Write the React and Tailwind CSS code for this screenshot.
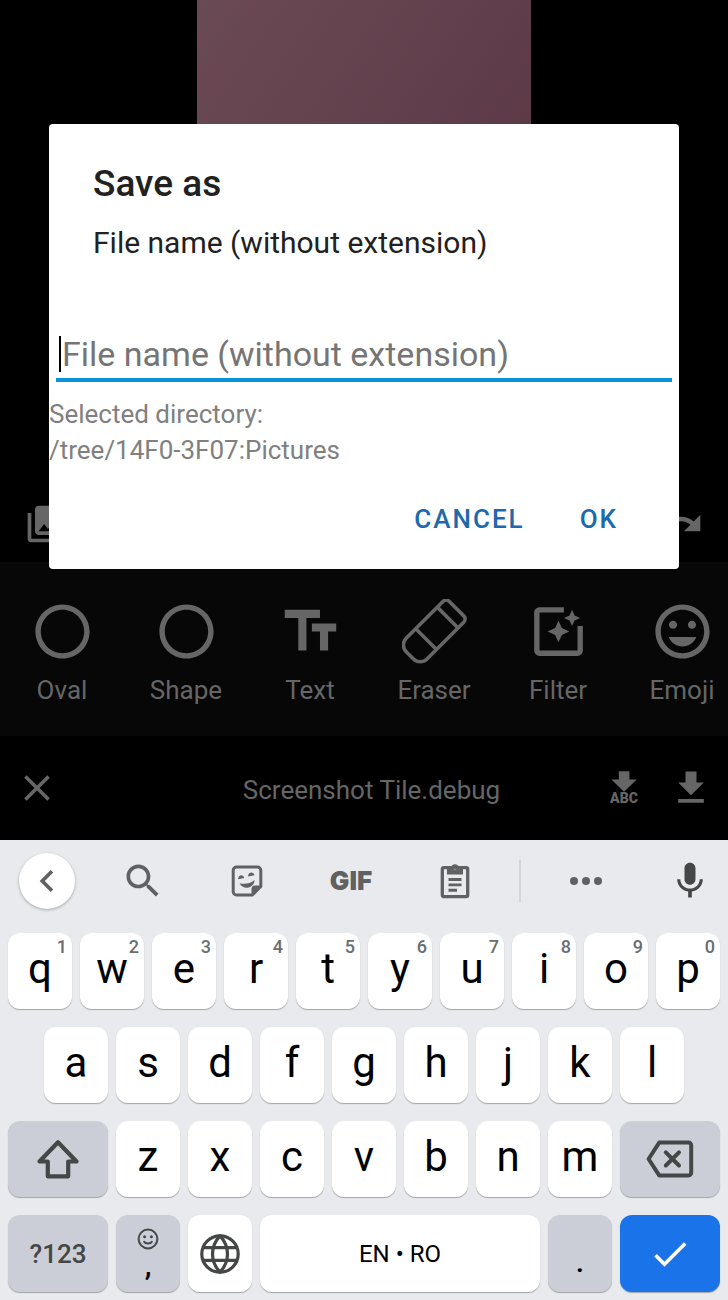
import React from "react";

function Material({ d, size = "size-11" }) {
  return (
    <svg viewBox="0 0 24 24" fill="currentColor" className={`${size} shrink-0`} aria-hidden="true">
      <path d={d} />
    </svg>
  );
}

const PATHS = {
  gallery:
    "M22 16V4c0-1.1-.9-2-2-2H8c-1.1 0-2 .9-2 2v12c0 1.1.9 2 2 2h12c1.1 0 2-.9 2-2zm-11-4l2.03 2.71L16 11l4 5H8l3-4zM2 6v14c0 1.1.9 2 2 2h14v-2H4V6H2z",
  redo: "M18.4 10.6C16.55 8.99 14.15 8 11.5 8c-4.65 0-8.58 3.03-9.96 7.22L3.9 16c1.05-3.19 4.05-5.5 7.6-5.5 1.95 0 3.73.72 5.12 1.88L13 16h9V7l-3.6 3.6z",
  circle:
    "M12 2C6.48 2 2 6.48 2 12s4.48 10 10 10 10-4.48 10-10S17.52 2 12 2zm0 18c-4.42 0-8-3.58-8-8s3.58-8 8-8 8 3.58 8 8-3.58 8-8 8z",
  text: "M2.5 4v3h5v12h3V7h5V4h-13zm19 5h-9v3h3v7h3v-7h3V9z",
  filter:
    "M19.02 10v9H5V5h9V3H5.02c-1.1 0-2 .9-2 2v14c0 1.1.9 2 2 2H19c1.1 0 2-.9 2-2v-9h-1.98zM17 10l.94-2.06L20 7l-2.06-.94L17 4l-.94 2.06L14 7l2.06.94L17 10zm-3.75.75L12 8l-1.25 2.75L8 12l2.75 1.25L12 16l1.25-2.75L16 12l-2.75-1.25z",
  emoji:
    "M11.99 2C6.47 2 2 6.48 2 12s4.47 10 9.99 10C17.52 22 22 17.52 22 12S17.52 2 11.99 2zM12 20c-4.42 0-8-3.58-8-8s3.58-8 8-8 8 3.58 8 8-3.58 8-8 8zm3.5-9c.83 0 1.5-.67 1.5-1.5S16.33 8 15.5 8 14 8.67 14 9.5s.67 1.5 1.5 1.5zm-7 0c.83 0 1.5-.67 1.5-1.5S9.33 8 8.5 8 7 8.67 7 9.5 7.67 11 8.5 11zm3.5 6.5c2.33 0 4.31-1.46 5.11-3.5H6.89c.8 2.04 2.78 3.5 5.11 3.5z",
  close:
    "M19 6.41L17.59 5 12 10.59 6.41 5 5 6.41 10.59 12 5 17.59 6.41 19 12 13.41 17.59 19 19 17.59 13.41 12z",
  download: "M19 9h-4V3H9v6H5l7 7 7-7zM5 18v2h14v-2H5z",
  back: "M15.41 7.41L14 6l-6 6 6 6 1.41-1.41L10.83 12z",
  search:
    "M15.5 14h-.79l-.28-.27C15.41 12.59 16 11.11 16 9.5 16 5.91 13.09 3 9.5 3S3 5.91 3 9.5 5.91 16 9.5 16c1.61 0 3.09-.59 4.23-1.57l.27.28v.79l5 4.99L20.49 19l-4.99-5zm-6 0C7.01 14 5 11.99 5 9.5S7.01 5 9.5 5 14 7.01 14 9.5 11.99 14 9.5 14z",
  mic: "M12 14c1.66 0 2.99-1.34 2.99-3L15 5c0-1.66-1.34-3-3-3S9 3.34 9 5v6c0 1.66 1.34 3 3 3zm5.3-3c0 3-2.54 5.1-5.3 5.1S6.7 14 6.7 11H5c0 3.41 2.72 6.23 6 6.72V21h2v-3.28c3.28-.48 6-3.3 6-6.72h-1.7z",
  check: "M9 16.17L4.83 12l-1.42 1.41L9 19 21 7l-1.41-1.41z",
};

function EraserIcon() {
  return (
    <svg viewBox="0 0 65 65" className="size-[65px]" fill="none" stroke="currentColor" strokeWidth="3.6" aria-hidden="true">
      <g transform="translate(31.2 33) rotate(-45)">
        <path d="M-23.5 -14.7H28.5a4.5 4.5 0 0 1 4.5 4.5V10.2a4.5 4.5 0 0 1 -4.5 4.5H-23.5a9.5 9.5 0 0 1 -9.5 -9.5V-5.2a9.5 9.5 0 0 1 9.5 -9.5z" />
        <path d="M-10 -14.7V14.7M20.5 -14.7V14.7" />
      </g>
    </svg>
  );
}

function DownloadAbcIcon() {
  return (
    <svg viewBox="0 0 44 44" className="size-11" fill="currentColor" aria-hidden="true">
      <path d="M16.8 5.3h10.6v8.2h7.4L22 25.8 9.4 13.5h7.4z" />
      <text x="22" y="37" textAnchor="middle" fontSize="14" fontWeight="900" fontFamily="Roboto, sans-serif">
        ABC
      </text>
    </svg>
  );
}

function StickerIcon() {
  return (
    <svg viewBox="0 0 32 32" className="size-8" fill="none" aria-hidden="true">
      <path
        d="M5.500 2h21A3.300 3.300 0 0 1 29.800 5.300V21.500L21.300 30H5.500A3.300 3.300 0 0 1 2.200 26.700V5.300A3.300 3.300 0 0 1 5.500 2z"
        stroke="currentColor"
        strokeWidth="3"
      />
      <path d="M20.500 31V24a3.500 3.500 0 0 1 3.500-3.500h7z" fill="currentColor" />
      <path
        d="M7.100 14.200c.2-5 5.400-5 6.100-1.200zM17 11.500c.2-5 5.700-5 6.400-1.200zM8.600 18.200c5.300 1.400 10.500.2 15-3.300-.6 9.200-12.200 10.200-15 3.300z"
        fill="currentColor"
      />
    </svg>
  );
}

function ClipboardIcon() {
  return (
    <svg viewBox="0 0 30 36" className="h-9 w-[30px]" fill="none" aria-hidden="true">
      <rect x="2.300" y="4.700" width="25.400" height="29" rx="1.600" stroke="currentColor" strokeWidth="3.300" />
      <path
        fillRule="evenodd"
        d="M7 4h4.200a4 4 0 0 1 7.600 0H23v7.500H7zM15 3.300a1.700 1.700 0 1 0 0 3.400 1.700 1.700 0 0 0 0-3.400z"
        fill="currentColor"
      />
      <path d="M8.500 16.500h13M8.500 21.900h13M8.500 27.300h8.500" stroke="currentColor" strokeWidth="2.900" />
    </svg>
  );
}

function MoreIcon() {
  return (
    <svg viewBox="0 0 32 8" className="h-2 w-8" fill="currentColor" aria-hidden="true">
      <circle cx="4" cy="4" r="4" />
      <circle cx="16" cy="4" r="4" />
      <circle cx="28" cy="4" r="4" />
    </svg>
  );
}

function ShiftIcon() {
  return (
    <svg viewBox="0 0 42 40" className="h-10 w-[42px]" fill="none" stroke="currentColor" strokeWidth="4.200" strokeLinejoin="round" aria-hidden="true">
      <path d="M21 3.200L39.500 22.500H31.200V37.300H10.800V22.500H2.500z" />
    </svg>
  );
}

function BackspaceIcon() {
  return (
    <svg viewBox="0 0 48 38" className="h-[38px] w-12" fill="none" stroke="currentColor" strokeWidth="4" strokeLinejoin="round" aria-hidden="true">
      <path d="M13.200 2.600H42.500a2.700 2.700 0 0 1 2.700 2.700V32.700a2.700 2.700 0 0 1 -2.700 2.700H13.200L2.600 19z" />
      <path d="M19.800 12.300L33 25.500M33 12.300L19.800 25.500" strokeLinecap="round" />
    </svg>
  );
}

function GlobeIcon() {
  return (
    <svg viewBox="0 0 40 40" className="size-10" fill="none" stroke="currentColor" strokeWidth="3.200" aria-hidden="true">
      <circle cx="20" cy="20" r="18.200" />
      <path d="M20 1.800C10 12.500 10 27.500 20 38.200C30 27.500 30 12.500 20 1.800zM3 13.700H37M3 26.300H37" />
    </svg>
  );
}

function SmileIcon() {
  return (
    <svg viewBox="0 0 22 22" className="size-[22px]" fill="none" stroke="currentColor" strokeWidth="2" aria-hidden="true">
      <circle cx="11" cy="11" r="9.400" />
      <circle cx="7.600" cy="8.800" r="1.500" fill="currentColor" stroke="none" />
      <circle cx="14.400" cy="8.800" r="1.500" fill="currentColor" stroke="none" />
      <path d="M6.600 13.300c1.800 3 7 3 8.800 0" />
    </svg>
  );
}

const big = "size-[65px]";
const TOOLS = [
  ["Oval", <Material d={PATHS.circle} size={big} />],
  ["Shape", <Material d={PATHS.circle} size={big} />],
  ["Text", <Material d={PATHS.text} size={big} />],
  ["Eraser", <EraserIcon />],
  ["Filter", <Material d={PATHS.filter} size={big} />],
  ["Emoji", <Material d={PATHS.emoji} size={big} />],
];

function Key({
  label,
  hint,
  span = "col-span-2",
  tone = "bg-white text-black",
  size = "text-[42px]",
  box = "h-[76px] pb-1",
  children,
}) {
  return (
    <button
      type="button"
      aria-label={label}
      className={`relative flex items-center justify-center rounded-xl leading-none shadow-[0_1px_1px_#a2a4a8] ${span} ${tone} ${size} ${box}`}
    >
      {children ?? label}
      {hint && <span className="absolute right-[5px] top-1 text-lg leading-5 font-medium text-[#6b6d70]">{hint}</span>}
    </button>
  );
}

const GRAY = "bg-[#cbced6] text-[#444746]";
const BOTTOM = "h-[77px]";

function Editor() {
  return (
    <div className="text-[#666666]">
      <div className="flex h-[486px] justify-center">
        <div className="w-[46%] bg-linear-to-br from-[#6a4a55] to-[#56303f]" />
      </div>
      <div className="flex h-[76px] items-center justify-between px-6">
        <button type="button" aria-label="Gallery">
          <Material d={PATHS.gallery} />
        </button>
        <button type="button" aria-label="Redo">
          <Material d={PATHS.redo} />
        </button>
      </div>
      <div className="grid h-[174px] auto-cols-[124px] grid-flow-col overflow-hidden bg-[#070707] pt-[37px]">
        {TOOLS.map(([name, icon]) => (
          <button key={name} type="button" className="flex flex-col items-center gap-2">
            {icon}
            <span className="text-[26px] leading-9">{name}</span>
          </button>
        ))}
      </div>
      <div className="flex h-[104px] items-center px-[15px]">
        <button type="button" aria-label="Close">
          <Material d={PATHS.close} />
        </button>
        <h1 className="flex-1 pt-1 pl-[82px] text-center text-[26px] leading-9">Screenshot Tile.debug</h1>
        <div className="flex gap-[23px]">
          <button type="button" aria-label="Save as">
            <DownloadAbcIcon />
          </button>
          <button type="button" aria-label="Save">
            <Material d={PATHS.download} />
          </button>
        </div>
      </div>
    </div>
  );
}

function SaveDialog() {
  return (
    <form
      role="dialog"
      aria-labelledby="save-title"
      onSubmit={(e) => e.preventDefault()}
      className="absolute inset-x-[49px] top-[124px] rounded-sm bg-white pt-[38px] pb-8"
    >
      <h2 id="save-title" className="px-11 text-[37px] leading-[44px] font-medium text-[#212121]">
        Save as
      </h2>
      <label htmlFor="file-name" className="mt-[19px] block px-11 text-[30px] leading-9 text-[#212121]">
        File name (without extension)
      </label>
      <div className="mx-[7px] mt-[71px] flex items-center border-b-4 border-[#0795d9] pb-0.5 pl-[3px]">
        <span className="mr-px h-9 w-0.5 bg-black" />
        <input
          id="file-name"
          type="text"
          placeholder="File name (without extension)"
          className="h-11 min-w-0 flex-1 bg-transparent text-[34px] leading-[44px] text-black outline-none placeholder:text-[#757575]"
        />
      </div>
      <p className="mt-[14px] text-[26px] leading-9 text-[#808080]">
        Selected directory:
        <br />
        /tree/14F0-3F07:Pictures
      </p>
      <div className="mt-[33px] flex justify-end gap-[55px] pr-[61px] text-[26px] leading-9 font-medium text-[#1c69ab]">
        <button type="button" className="tracking-[2px]">
          CANCEL
        </button>
        <button type="submit" className="tracking-[2px]">
          OK
        </button>
      </div>
    </form>
  );
}

function Keyboard() {
  return (
    <div className="bg-[#e8eaed] pb-2">
      <div className="flex h-[93px] items-center pb-[11px] pl-[19px] text-[#5f6163]">
        <button
          type="button"
          aria-label="Back"
          className="mr-4 flex size-14 shrink-0 items-center justify-center rounded-full bg-white shadow-[0_1px_3px_#a2a4a8]"
        >
          <Material d={PATHS.back} />
        </button>
        <div className="grid flex-1 grid-cols-4 place-items-center">
          <button type="button" aria-label="Search">
            <Material d={PATHS.search} />
          </button>
          <button type="button" aria-label="Stickers">
            <StickerIcon />
          </button>
          <button type="button" className="font-[Inter,sans-serif] text-[26px] leading-8 font-black">
            GIF
          </button>
          <button type="button" aria-label="Clipboard">
            <ClipboardIcon />
          </button>
        </div>
        <div className="ml-3 h-[42px] w-0.5 bg-[#d3d5d8]" />
        <button type="button" aria-label="More" className="flex w-[130px] justify-center">
          <MoreIcon />
        </button>
        <button type="button" aria-label="Voice input" className="flex w-[77px] justify-center text-[#444746]">
          <Material d={PATHS.mic} />
        </button>
      </div>
      <div className="grid grid-cols-20 gap-x-2 gap-y-[18px] px-2">
        {[..."qwertyuiop"].map((c, i) => (
          <Key key={c} label={c} hint={String((i + 1) % 10)} />
        ))}
        {[..."asdfghjkl"].map((c) => (
          <Key key={c} label={c} span={c === "a" ? "col-span-2 col-start-2" : "col-span-2"} />
        ))}
        <Key label="Shift" span="col-span-3 col-start-1" tone={GRAY} box="h-[76px]">
          <ShiftIcon />
        </Key>
        {[..."zxcvbnm"].map((c) => (
          <Key key={c} label={c} />
        ))}
        <Key label="Backspace" span="col-span-3" tone={GRAY} box="h-[76px]">
          <BackspaceIcon />
        </Key>
        <Key label="?123" span="col-span-3" tone={GRAY} size="text-[26px] font-medium" box={BOTTOM} />
        <Key label="Comma" tone={GRAY} size="text-[30px] font-medium" box={BOTTOM}>
          <span className="flex flex-col items-center">
            <SmileIcon />
            <span className="text-black">,</span>
          </span>
        </Key>
        <Key label="Language" tone="bg-white text-[#444746]" box={BOTTOM}>
          <GlobeIcon />
        </Key>
        <Key label="EN • RO" span="col-span-8" size="text-2xl" box={BOTTOM} />
        <Key label="Period" size="text-[30px] font-medium" tone="bg-[#cbced6] text-black" box={BOTTOM}>
          <span className="pt-4">.</span>
        </Key>
        <Key label="Done" span="col-span-3" tone="bg-[#1a73e8] text-white" box={BOTTOM}>
          <Material d={PATHS.check} />
        </Key>
      </div>
    </div>
  );
}

export default function App() {
  return (
    <main className="relative min-h-screen bg-black font-[Roboto,sans-serif]">
      <Editor />
      <SaveDialog />
      <Keyboard />
    </main>
  );
}
